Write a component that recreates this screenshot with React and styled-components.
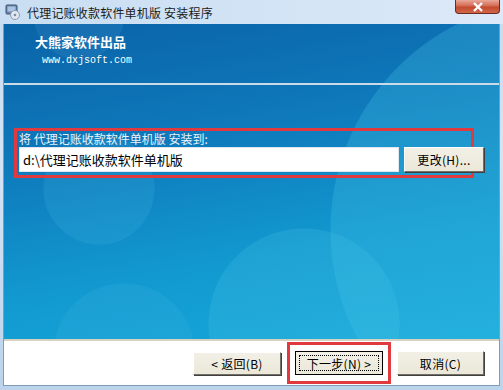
import styled, { createGlobalStyle } from "styled-components";

const GlobalStyle = createGlobalStyle`
  html, body { margin: 0; padding: 0; background: #fff; }
  body { font-family: "Noto Sans CJK SC", "DejaVu Sans", sans-serif; }
`;

const Window = styled.div`
  width: 503px;
  height: 390px;
  display: flex;
  flex-direction: column;
  background: linear-gradient(180deg, #c4daf1 0%, #d4e4f5 40%, #bcd3ec 100%);
  box-sizing: border-box;
  overflow: hidden;
`;

const TitleBar = styled.div`
  height: 24px;
  flex: none;
  display: flex;
  align-items: center;
  padding-left: 5px;
  position: relative;
  background: linear-gradient(90deg, #c9def2 0%, #d2e3f5 50%, #dce9f8 100%);
`;

const TitleText = styled.span`
  margin-left: 6px;
  font-size: 12px;
  color: #1b1b1b;
  letter-spacing: 0.2px;
`;

const CloseBtn = styled.div`
  position: absolute;
  right: 3px;
  top: 0;
  width: 45px;
  height: 14px;
  border: 1px solid #6b2a22;
  border-top: none;
  border-radius: 0 0 4px 4px;
  background: linear-gradient(180deg, #e9a99a 0%, #d46a52 45%, #c24a2f 55%, #d0684b 100%);
  box-sizing: border-box;
  display: flex;
  align-items: center;
  justify-content: center;
`;

const Frame = styled.div`
  flex: 1;
  display: flex;
  flex-direction: column;
  margin: 0 3px 4px 3px;
  border: 1px solid #7f9db9;
  border-top: none;
  background: #fff;
`;

const Banner = styled.div`
  flex: 1;
  display: flex;
  flex-direction: column;
  background:
    radial-gradient(circle at 557px 206px, rgba(70, 195, 230, 0.28) 0 230px, transparent 231px),
    radial-gradient(circle at 300px 300px, rgba(90, 205, 235, 0.18) 0 95px, transparent 96px),
    radial-gradient(circle at 95px 165px, rgba(80, 190, 230, 0.16) 0 55px, transparent 56px),
    radial-gradient(circle at 75px -10px, rgba(70, 150, 210, 0.2) 0 45px, transparent 46px),
    radial-gradient(circle at 120px 330px, rgba(70, 180, 225, 0.18) 0 70px, transparent 71px),
    linear-gradient(170deg, #0a63a7 0%, #0e79bb 35%, #129ad0 70%, #16a9da 100%);
`;

const Header = styled.div`
  height: 61px;
  flex: none;
  padding: 10px 0 0 31px;
  box-sizing: border-box;
  border-bottom: 2px solid #c9dbe6;
`;

const Brand = styled.div`
  color: #fff;
  font-size: 13px;
  font-weight: bold;
  line-height: 16px;
`;

const Url = styled.div`
  color: #fff;
  font-family: "Liberation Mono", "DejaVu Sans Mono", monospace;
  font-size: 10px;
  line-height: 12px;
  margin: 5px 0 0 7px;
`;

const Content = styled.div`
  padding: 43px 0 0 10px;
`;

const Highlight = styled.div`
  width: 460px;
  height: 50px;
  box-sizing: border-box;
  border: 3px solid #e0393e;
  padding: 1px 0 0 2px;
`;

const Label = styled.div`
  color: #e8f4fb;
  font-size: 12px;
  line-height: 14px;
  height: 15px;
`;

const Row = styled.div`
  display: flex;
  align-items: center;
  gap: 5px;
  width: 470px;
`;

const PathInput = styled.div`
  width: 380px;
  height: 25px;
  background: #fff;
  border: 1px solid #dfe6ee;
  box-sizing: border-box;
  font-size: 13px;
  line-height: 23px;
  padding-left: 3px;
  color: #000;
  white-space: nowrap;
`;

const XpButton = styled.div`
  width: ${(p) => p.$w || 87}px;
  height: ${(p) => p.$h || 24}px;
  box-sizing: border-box;
  background: linear-gradient(180deg, #f2f0e6 0%, #ebe8d9 100%);
  border: 1px solid;
  border-color: #fff #716f64 #716f64 #fff;
  box-shadow: 1px 1px 0 #404040;
  font-size: 12px;
  color: #000;
  display: flex;
  align-items: center;
  justify-content: center;
  white-space: nowrap;
  letter-spacing: 0.3px;
  ${(p) =>
    p.$default &&
    `
    border: 1px solid #000;
    box-shadow: none;
    outline: 1px dotted #000;
    outline-offset: -5px;
  `}
`;

const Footer = styled.div`
  height: 46px;
  flex: none;
  border-top: 2px solid #d6d2c2;
  display: flex;
  align-items: center;
  justify-content: flex-end;
  padding-right: 15px;
  gap: 14px;
  box-sizing: border-box;
`;

const NextWrap = styled.div`
  padding: 6px 5px;
  border: 3px solid #e0393e;
  margin: 0 -8px;
  display: flex;
`;

export default function App() {
  return (
    <>
      <GlobalStyle />
      <Window>
        <TitleBar>
          <svg width="16" height="16" viewBox="0 0 16 16">
            <rect x="1" y="1" width="11" height="9" rx="1" fill="#6f86a8" stroke="#3d5170" />
            <rect x="2.5" y="2.5" width="8" height="5" fill="#aac4e4" />
            <circle cx="10" cy="11" r="4.5" fill="#dfe7f0" stroke="#8a9bb3" />
            <circle cx="10" cy="11" r="1.3" fill="#7a8ba3" />
          </svg>
          <TitleText>代理记账收款软件单机版 安装程序</TitleText>
          <CloseBtn>
            <svg width="12" height="10" viewBox="0 0 12 10">
              <path d="M2 1 L10 9 M10 1 L2 9" stroke="#fff" strokeWidth="2.4" />
            </svg>
          </CloseBtn>
        </TitleBar>
        <Frame>
          <Banner>
            <Header>
              <Brand>大熊家软件出品</Brand>
              <Url>www.dxjsoft.com</Url>
            </Header>
            <Content>
              <Highlight>
                <Label>将 代理记账收款软件单机版 安装到:</Label>
                <Row>
                  <PathInput>d:\代理记账收款软件单机版</PathInput>
                  <XpButton $w={80} $h={25}>更改(H)...</XpButton>
                </Row>
              </Highlight>
            </Content>
          </Banner>
          <Footer>
            <XpButton $w={88} $h={23}>&lt; 返回(B)</XpButton>
            <NextWrap>
              <XpButton $w={88} $h={24} $default>下一步(N) &gt;</XpButton>
            </NextWrap>
            <XpButton $w={87} $h={24}>取消(C)</XpButton>
          </Footer>
        </Frame>
      </Window>
    </>
  );
}
